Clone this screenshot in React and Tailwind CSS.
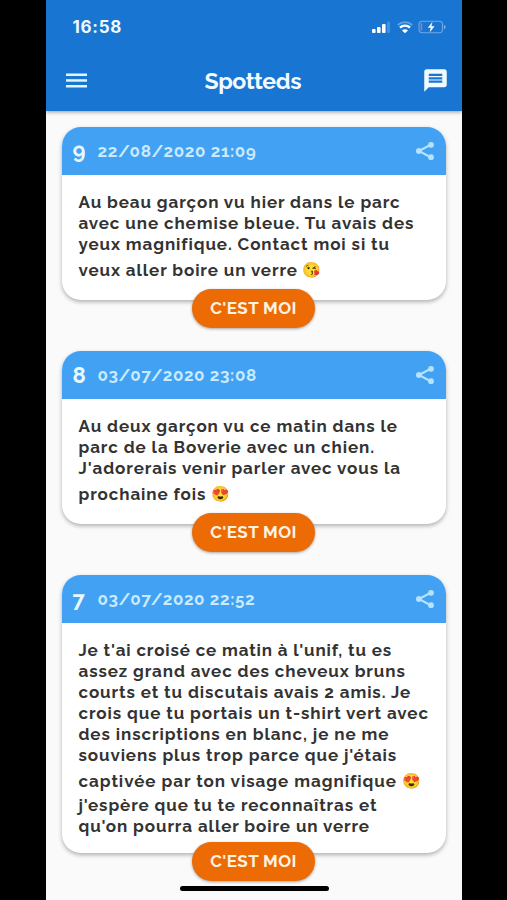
import React from 'react';
import { MdMessage } from 'react-icons/md';

const spotteds = [
  {
    id: 9,
    date: '22/08/2020 21:09',
    lines: [
      { text: 'Au beau garçon vu hier dans le parc' },
      { text: 'avec une chemise bleue. Tu avais des' },
      { text: 'yeux magnifique. Contact moi si tu' },
      { text: 'veux aller boire un verre', emoji: '😘' },
    ],
  },
  {
    id: 8,
    date: '03/07/2020 23:08',
    lines: [
      { text: 'Au deux garçon vu ce matin dans le' },
      { text: 'parc de la Boverie avec un chien.' },
      { text: "J'adorerais venir parler avec vous la" },
      { text: 'prochaine fois', emoji: '😍' },
    ],
  },
  {
    id: 7,
    date: '03/07/2020 22:52',
    lines: [
      { text: "Je t'ai croisé ce matin à l'unif, tu es", tracking: 'tracking-[0.85px]' },
      { text: 'assez grand avec des cheveux bruns' },
      { text: 'courts et tu discutais avais 2 amis. Je' },
      { text: 'crois que tu portais un t-shirt vert avec' },
      { text: 'des inscriptions en blanc, je ne me' },
      { text: "souviens plus trop parce que j'étais" },
      { text: 'captivée par ton visage magnifique', emoji: '😍', tracking: 'tracking-[0.96px]' },
      { text: "j'espère que tu te reconnaîtras et" },
      { text: "qu'on pourra aller boire un verre" },
    ],
  },
];

const StatusBar = () => (
  <div className="flex h-[52px] items-center justify-between pl-[27px] pr-4 pt-0.5">
    <span className="pt-0.5 font-[Inter,sans-serif] text-[17px] font-bold tracking-[0.7px] text-[#eefaff]">
      16:58
    </span>
    <svg width="75" height="14" viewBox="0 0 75 14" fill="none">
      {/* signal */}
      <rect x="1" y="9" width="3.6" height="4" rx="1" fill="#fff" />
      <rect x="6" y="7" width="3.6" height="6" rx="1" fill="#fff" />
      <rect x="11" y="4" width="3.6" height="9" rx="1" fill="#fff" />
      <rect x="16" y="1.5" width="3" height="11.5" rx="1" fill="#4390de" />
      {/* wifi */}
      <path d="M26.8 5a10.5 10.5 0 0 1 14.4 0" stroke="#5fa2e6" strokeWidth="1.8" />
      <path d="M29 7.7a7 7 0 0 1 10 0" stroke="#fff" strokeWidth="2.4" />
      <path d="M31 10.4a4.2 4.2 0 0 1 6 0L34 13.3z" fill="#fff" />
      {/* battery */}
      <rect x="48" y="1.2" width="23.5" height="11.6" rx="3.2" stroke="#6aa9ea" strokeWidth="1.1" />
      <rect x="49.5" y="3" width="1.8" height="8" rx="0.9" fill="#8f7fb8" />
      <path d="M73 5v4.2c1-.4 1.6-1.2 1.6-2.1S74 5.4 73 5z" fill="#7db5ee" />
      <path d="M61.5 1.8 56.8 7.8h3L58.6 12.4l5-6.2h-3.2z" fill="#fff" />
    </svg>
  </div>
);

const ShareIcon = () => (
  <svg className="ml-auto" width="20" height="20" viewBox="0 0 20 20" fill="#b5e2ff">
    <path d="M16 3.5 4 10l12 6.5" fill="none" stroke="#b5e2ff" strokeWidth="2" />
    <circle cx="16" cy="3.8" r="2.9" />
    <circle cx="3.9" cy="10" r="2.9" />
    <circle cx="16" cy="16.2" r="2.9" />
  </svg>
);

const AppBar = () => (
  <div className="flex h-[57px] items-center pl-[20.5px] pr-[13px]">
    <svg width="21" height="15" viewBox="0 0 21 15" fill="#e0f5ff">
      <rect y="0.5" width="21" height="2.5" />
      <rect y="6.2" width="21" height="2.5" />
      <rect y="12" width="21" height="2.5" />
    </svg>
    <h1 className="ml-[117.5px] pt-0.5 text-[23px] font-bold tracking-[-0.4px] text-[#f3fbff]">Spotteds</h1>
    <MdMessage className="ml-auto size-[27px] text-[#f0faff]" />
  </div>
);

const SpottedCard = ({ spotted }) => (
  <article className="flex flex-col items-center">
    <div className="w-full overflow-hidden rounded-[19px] bg-white shadow-[0_2px_4px_rgba(0,0,0,0.3)]">
      <header className="flex h-[47.5px] items-center bg-[#42a1f3] px-[11px]">
        <span className="w-6 text-[22px] font-bold leading-none text-[#e9f8ff]">{spotted.id}</span>
        <time className="pl-px pt-0.5 text-[17px] font-bold tracking-[0.6px] text-[#c9eaff]">{spotted.date}</time>
        <ShareIcon />
      </header>
      <p className="pb-4 pl-[17px] pt-[17px] text-[17px] font-bold leading-[21px] tracking-[0.9px] text-[#333333]">
        {spotted.lines.map((line) => (
          <span
            key={line.text}
            className={`whitespace-nowrap ${line.emoji ? 'flex h-[29.5px] items-end pb-[3px]' : 'block'} ${line.tracking || ''}`}
          >
            {line.text}
            {line.emoji && (
              <span className="ml-[5px] font-['Noto_Color_Emoji'] text-[15px] tracking-normal">{line.emoji}</span>
            )}
          </span>
        ))}
      </p>
    </div>
    <button className="relative -mt-[11px] h-[39px] w-[123px] rounded-full bg-[#ec6b05] text-[17px] font-bold tracking-[0.4px] text-[#fff3e2] shadow-[0_1px_3px_rgba(0,0,0,0.35)]">
      C'EST MOI
    </button>
  </article>
);

const App = () => (
  <div className="flex h-[900px] w-[507px] justify-center overflow-hidden bg-black font-[Raleway,Lato,sans-serif]">
    <div className="relative h-full w-[416px] overflow-hidden bg-[#fafafa]">
      <div className="relative h-[111px] bg-[#1875d2] shadow-[0_1px_4px_rgba(0,0,0,0.4)]">
        <StatusBar />
        <AppBar />
      </div>
      <main className="flex flex-col gap-[23px] px-4 pt-4">
        {spotteds.map((spotted) => (
          <SpottedCard key={spotted.id} spotted={spotted} />
        ))}
      </main>
      <div className="absolute bottom-[9px] left-[134px] h-[5px] w-[149px] rounded-full bg-black" />
    </div>
  </div>
);

export default App;
